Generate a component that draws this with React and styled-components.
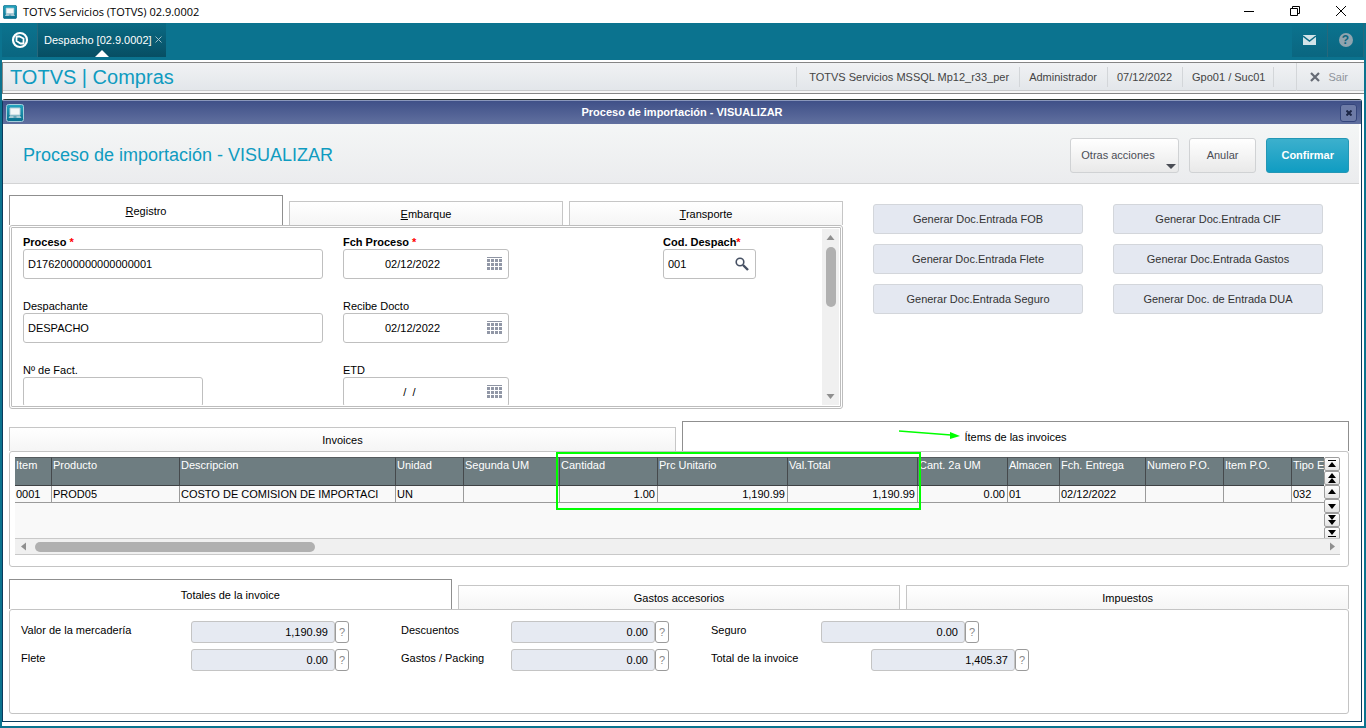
import React from 'react';
import styled, { createGlobalStyle, css } from 'styled-components';

const GlobalStyle = createGlobalStyle`
  * {
    box-sizing: border-box;
  }
  body {
    margin: 0;
    font-family: "Liberation Sans", Arial, sans-serif;
    font-size: 11px;
    color: #000;
    background: #fff;
  }
  button, input {
    font: inherit;
    color: inherit;
    margin: 0;
    padding: 0;
  }
`;

/* ---------- icons ---------- */

const AppIcon = ({ size }) => (
  <svg width={size} height={size} viewBox="0 0 18 18" aria-hidden="true">
    <defs>
      <linearGradient id={`app${size}`} x1="0" y1="0" x2="0" y2="1">
        <stop offset="0" stopColor="#23a5c0" />
        <stop offset="1" stopColor="#0a6f8e" />
      </linearGradient>
    </defs>
    <rect x="0.5" y="0.5" width="17" height="17" rx="2" fill={`url(#app${size})`} stroke={size > 14 ? '#a5cedb' : '#0a6f8e'} />
    <path d="M4 4h10v7H4z" fill="#f3f6f7" stroke="#b4ced8" />
    <path d="M4 11.5h10l1.5 2.5h-13z" fill="#a9c9d4" />
    <path d="M7.5 12.5h3v1h-3z" fill="#2b7f99" />
  </svg>
);

const TotvsIcon = () => (
  <svg width="18" height="18" viewBox="0 0 18 18" aria-hidden="true">
    <circle cx="9" cy="9" r="7" fill="none" stroke="#fff" strokeWidth="2.2" />
    <path d="M5.5 5.5h3l4 2v5h-3l-4-2.500z" fill="#0a6a84" stroke="#fff" strokeWidth="1.8" />
  </svg>
);

const MailIcon = () => (
  <svg width="14" height="12" viewBox="0 0 14 12" aria-hidden="true">
    <path d="M0 1h13v10H0z" fill="#d3e3e8" />
    <path d="M0 2l6.500 5L13 2" fill="none" stroke="#0a6a84" strokeWidth="1.4" />
  </svg>
);

const CalendarIcon = () => (
  <svg width="15" height="14" viewBox="0 0 15 14" aria-hidden="true">
    <path d="M0 0h15v1H0z" fill="#8e94a3" />
    {[2, 6, 10].map(y => [0, 4, 8, 12].map(x => (
      <rect key={`${x}-${y}`} x={x} y={y} width="3" height="3" fill="#9197a6" />
    )))}
  </svg>
);

const SearchIcon = () => (
  <svg width="14" height="14" viewBox="0 0 14 14" aria-hidden="true">
    <circle cx="5" cy="5" r="3.8" fill="none" stroke="#465063" strokeWidth="1.6" />
    <path d="M8 8l5 5" stroke="#465063" strokeWidth="2.4" />
  </svg>
);

const Arrow = ({ dir, color = '#8f8f8f' }) => {
  const turn = { up: 0, right: 90, down: 180, left: 270 }[dir];
  return (
    <svg width="9" height="9" viewBox="0 0 9 9" aria-hidden="true">
      <path d="M0.5 7L4.5 2l4 5z" fill={color} transform={`rotate(${turn} 4.5 4.5)`} />
    </svg>
  );
};

const navShapes = {
  first: 'M4 2h8v1H4zM4 9h8L8 4z',
  pageUp: 'M4 6h8L8 1zM4 11h8L8 6z',
  up: 'M4 8h8L8 3z',
  down: 'M4 4h8L8 9z',
  pageDown: 'M4 1h8L8 6zM4 6h8l-4 5z',
  last: 'M4 2h8L8 7zM4 8h8v1H4z',
};

const NavIcon = ({ kind }) => (
  <svg width="16" height="12" viewBox="0 0 16 12" aria-hidden="true">
    <path d={navShapes[kind]} fill="#000" />
  </svg>
);

/* ---------- window chrome ---------- */

const Page = styled.div`
  display: flex;
  flex-direction: column;
  min-height: 100vh;
  background: #fff;
`;

const WindowBar = styled.header`
  display: flex;
  align-items: center;
  height: 23px;
  padding: 0 2px 0 3px;
  gap: 6px;
  font-family: "Open Sans", "Noto Sans", sans-serif;
  font-size: 11px;
`;

const WindowButtons = styled.div`
  display: flex;
  margin-left: auto;
`;

const WindowButton = styled.button`
  display: flex;
  align-items: center;
  justify-content: center;
  width: 46px;
  height: 22px;
  padding-bottom: 2px;
  border: 0;
  background: none;
`;

const TopBar = styled.nav`
  display: flex;
  align-items: flex-start;
  height: 37px;
  padding: 0 2px;
  background: #0b738f;
`;

const TopCell = styled.button`
  display: flex;
  align-items: center;
  justify-content: center;
  width: 36px;
  height: 34px;
  border: 0;
  border-right: 1px solid #27687c;
  background: linear-gradient(#0b738f, #0a6680);
  color: #fff;
`;

const TopTab = styled.div`
  position: relative;
  display: flex;
  align-items: center;
  height: 34px;
  padding: 0 4px 0 6px;
  gap: 3px;
  background: linear-gradient(#0a6a84, #074e63);
  color: #fff;
  a {
    color: #fff;
    text-decoration: none;
  }
  &::after {
    content: "";
    position: absolute;
    left: 50%;
    bottom: 0;
    margin-left: -7px;
    border: 7px solid transparent;
    border-top: 0;
    border-bottom-color: #fff;
  }
`;

const TabClose = styled.button`
  display: flex;
  border: 0;
  background: none;
`;

const TopRight = styled.div`
  display: flex;
  margin-left: auto;
`;

const HelpBadge = styled.span`
  width: 14px;
  height: 14px;
  border-radius: 50%;
  background: #8fa4af;
  color: #0a6680;
  font-size: 12px;
  font-weight: bold;
  line-height: 14px;
`;

const Frame = styled.main`
  display: flex;
  flex: 1;
  flex-direction: column;
  padding: 2px 0 4px;
  border: solid #0b738f;
  border-width: 0 2px 2px;
`;

const ModuleBar = styled.div`
  display: flex;
  align-items: center;
  height: 32px;
  padding: 0 6px 2px 7px;
  border: 1px solid #858585;
  border-right: 0;
  background: linear-gradient(#f0f2f4, #e1e5e9);
  box-shadow: inset 0 -2px #f6f6f6, inset 0 -3px #c9cbcd;
  color: #444;
`;

const ModuleName = styled.h1`
  flex: 1;
  margin: 0;
  color: #0f9bc0;
  font-size: 20px;
  font-weight: normal;
`;

const ModuleInfo = styled.span`
  padding: 0 ${p => (p.$last ? 8 : 10)}px 0 ${p => (p.$first ? 12 : 9)}px;
  border-left: 1px solid #d3d6d9;
  border-right: ${p => (p.$last ? '1px solid #d3d6d9' : 0)};
  line-height: 20px;
`;

const ExitButton = styled.button`
  display: flex;
  align-items: center;
  gap: 8px;
  height: 28px;
  margin-left: 22px;
  padding: 0 10px 0 13px;
  border: 0;
  border-left: 1px solid #d3d6d9;
  background: none;
  color: #8f949b;
`;

/* ---------- dialog ---------- */

const Dialog = styled.section`
  display: flex;
  flex: 1;
  flex-direction: column;
  margin: 5px 2px 0 0;
  border: 1px solid #0b3a5c;
  border-top-color: #2b332f;
  border-radius: 3px 3px 0 0;
`;

const DialogBar = styled.div`
  display: flex;
  align-items: center;
  height: 24px;
  padding: 0 4px 0 3px;
  border-top: 1px solid #8a97bb;
  background: linear-gradient(#3f5088, #61709f);
  color: #fff;
  font-weight: bold;
  h2 {
    flex: 1;
    margin: 0 0 2px;
    font-size: 11px;
    text-align: center;
  }
`;

const DialogClose = styled.button`
  display: flex;
  align-items: center;
  justify-content: center;
  width: 17px;
  height: 18px;
  border: 1px solid #34457c;
  border-radius: 3px;
  background: #6d7ba7;
`;

const DialogHeader = styled.div`
  display: flex;
  align-items: center;
  height: 60px;
  margin-right: 2px;
  padding: 3px 10px 0 20px;
  gap: 10px;
  border-bottom: 1px solid #d3d4d5;
  background: linear-gradient(#f4f6f6, #ebecee);
  h3 {
    flex: 1;
    margin: 0;
    color: #0f9bc0;
    font-size: 18px;
    font-weight: normal;
  }
`;

const ActionButton = styled.button`
  display: flex;
  align-items: center;
  height: 35px;
  padding: 0 ${p => (p.$menu ? 2 : 17)}px 0 ${p => (p.$menu ? 10 : 17)}px;
  border: 1px solid #d0d2d4;
  border-radius: 3px;
  background: linear-gradient(#fff, #e9e9e9);
  color: #4a4d55;
  svg {
    align-self: flex-end;
    margin: 0 0 3px 11px;
  }
  ${p => p.$primary && css`
    padding: 0 14px;
    border-color: #2397b5;
    background: linear-gradient(#3cb0cd, #109cc2);
    color: #fff;
    font-weight: bold;
  `}
`;

const DialogBody = styled.div`
  display: flex;
  flex: 1;
  flex-direction: column;
  padding: 11px 12px 7px 6px;
  gap: 12px;
`;

const TopArea = styled.div`
  display: flex;
  gap: 30px;
`;

const TabGroup = styled.div`
  display: flex;
  flex: 1;
  flex-direction: column;
  min-width: 0;
`;

const TabStrip = styled.div`
  display: flex;
  align-items: flex-end;
  gap: 6px;
  height: 30px;
`;

const Tab = styled.button`
  flex: 1;
  height: ${p => (p.$active ? 30 : 24)}px;
  border: 1px solid ${p => (p.$active ? '#8f8f8f' : '#c6c6c6')};
  border-bottom: 0;
  background: ${p => (p.$active ? '#fff' : 'linear-gradient(#fff, #f5f5f5)')};
  text-align: center;
`;

const Panel = styled.div`
  position: relative;
  flex: 1;
  border: 1px solid #c4c4c4;
  border-radius: 3px;
  background: #fff;
`;

const FormPanel = styled(Panel)`
  display: flex;
  flex: none;
  height: 184px;
  padding: 1px 1px 1px 0;
  border: 3px double #bdbdbd;
`;

const FormGrid = styled.div`
  display: grid;
  grid-template-columns: 300px 300px 1fr;
  grid-auto-rows: 64px;
  flex: 1;
  column-gap: 20px;
  padding: 6px 0 0 11px;
  overflow: hidden;
`;

const Field = styled.div`
  display: flex;
  flex-direction: column;
  align-items: flex-start;
  label {
    line-height: 14px;
    font-weight: ${p => (p.$required ? 'bold' : 'normal')};
  }
  em {
    color: #f00;
    font-style: normal;
  }
`;

const InputBox = styled.div`
  display: flex;
  align-items: center;
  width: ${p => p.$width}px;
  max-width: 100%;
  height: 30px;
  padding: 0 6px 0 4px;
  border: 1px solid #bfbfbf;
  border-radius: 3px;
  background: #fff;
  input {
    flex: 1;
    min-width: 0;
    padding-right: ${p => (p.$center ? 10 : 0)}px;
    border: 0;
    outline: 0;
    background: none;
    text-align: ${p => (p.$center ? 'center' : 'left')};
  }
`;

const IconButton = styled.button`
  display: flex;
  border: 0;
  background: none;
`;

const ScrollColumn = styled.div`
  display: flex;
  flex-direction: column;
  align-items: center;
  width: 17px;
  padding: 4px 0;
  background: #f0f0f0;
`;

const ThumbY = styled.div`
  width: 10px;
  height: 60px;
  margin: 5px 0 auto;
  border-radius: 5px;
  background: #b0b0b0;
`;

const GenerateGrid = styled.div`
  display: grid;
  grid-template-columns: 210px 210px;
  grid-auto-rows: 30px;
  gap: 10px 30px;
  padding: 9px 26px 0 0;
`;

const GenerateButton = styled.button`
  border: 1px solid #d3d6db;
  border-radius: 3px;
  background: #e4e8f1;
  color: #333;
`;

/* ---------- invoice items ---------- */

const GridPanel = styled(Panel)`
  flex: none;
  padding: 5px 8px 11px 5px;
`;

const GridArea = styled.div`
  display: flex;
  height: 81px;
  background: #f9f9f9;
`;

const GridView = styled.div`
  flex: 1;
  overflow: hidden;
`;

const ItemsTable = styled.table`
  width: 1360px;
  table-layout: fixed;
  border-collapse: separate;
  border-spacing: 0;
  th, td {
    overflow: hidden;
    padding: 0 2px 0 1px;
    white-space: nowrap;
    text-align: left;
  }
  th {
    height: 29px;
    padding-top: 1px;
    border-top: 1px solid #555b5e;
    border-right: 1px solid #45494c;
    border-bottom: 1px solid #3f4245;
    background: #6e7d81;
    color: #fff;
    font-weight: normal;
    line-height: 12px;
    vertical-align: top;
  }
  td {
    height: 17px;
    border-right: 1px solid #9b9b9b;
    border-bottom: 1px solid #9b9b9b;
  }
  td.num {
    text-align: right;
  }
`;

const NavColumn = styled.div`
  display: flex;
  flex-direction: column;
  width: 16px;
  overflow: hidden;
`;

const NavButton = styled.button`
  display: flex;
  flex: none;
  align-items: center;
  justify-content: center;
  height: 14px;
  border: 1px solid #9d9d9d;
  border-radius: 2px;
  background: linear-gradient(#fff, #e4e4e4);
  svg {
    flex: none;
  }
`;

const ScrollRow = styled.div`
  display: flex;
  align-items: center;
  height: 17px;
  padding: 0 3px 0 4px;
  border: solid #c9c9c9;
  border-width: 1px 0;
  background: #f0f0f0;
`;

const ThumbX = styled.div`
  width: 280px;
  height: 10px;
  margin: 0 auto 0 7px;
  border-radius: 5px;
  background: #b0b0b0;
`;

/* green marks drawn over the grid */
const MarkBox = styled.div`
  position: absolute;
  top: 0;
  left: 546px;
  width: 365px;
  height: 58px;
  border: 2px solid #00ff00;
  pointer-events: none;
`;

const MarkArrow = styled.svg`
  position: absolute;
  top: -23px;
  left: 888px;
  width: 64px;
  height: 12px;
  pointer-events: none;
`;

/* ---------- totals ---------- */

const TotalsPanel = styled(Panel)`
  padding: 11px;
  display: flex;
  flex-direction: column;
  gap: 6px;
`;

const TotalsRow = styled.div`
  display: flex;
  flex-wrap: wrap;
`;

const Total = styled.div`
  display: flex;
  margin-right: ${p => p.$after || 0}px;
  label {
    width: ${p => p.$label}px;
    line-height: 18px;
  }
  input {
    width: 144px;
    height: 22px;
    padding: 0 6px;
    border: 1px solid #c4c4c4;
    border-radius: 3px;
    background: #e6eaf2;
    text-align: right;
  }
  button {
    width: 14px;
    height: 22px;
    border: 1px solid #9b9b9b;
    border-radius: 3px;
    background: #fff;
    color: #888;
  }
`;

const generateLabels = [
  'Generar Doc.Entrada FOB',
  'Generar Doc.Entrada CIF',
  'Generar Doc.Entrada Flete',
  'Generar Doc.Entrada Gastos',
  'Generar Doc.Entrada Seguro',
  'Generar Doc. de Entrada DUA',
];

const columns = [
  { title: 'Item', width: 37, value: '0001' },
  { title: 'Producto', width: 128, value: 'PROD05' },
  { title: 'Descripcion', width: 216, value: 'COSTO DE COMISION DE IMPORTACI' },
  { title: 'Unidad', width: 68, value: 'UN' },
  { title: 'Segunda UM', width: 96, value: '' },
  { title: 'Cantidad', width: 98, value: '1.00', num: true },
  { title: 'Prc Unitario', width: 130, value: '1,190.99', num: true },
  { title: 'Val.Total', width: 130, value: '1,190.99', num: true },
  { title: 'Cant. 2a UM', width: 90, value: '0.00', num: true },
  { title: 'Almacen', width: 52, value: '01' },
  { title: 'Fch. Entrega', width: 86, value: '02/12/2022' },
  { title: 'Numero P.O.', width: 78, value: '' },
  { title: 'Item P.O.', width: 68, value: '' },
  { title: 'Tipo Entrada', width: 83, value: '032' },
];

const totals = [
  [
    { id: 'valor', text: 'Valor de la mercadería', value: '1,190.99', label: 170, after: 52 },
    { id: 'descuentos', text: 'Descuentos', value: '0.00', label: 110, after: 42 },
    { id: 'seguro', text: 'Seguro', value: '0.00', label: 110 },
  ],
  [
    { id: 'flete', text: 'Flete', value: '0.00', label: 170, after: 52 },
    { id: 'gastos', text: 'Gastos / Packing', value: '0.00', label: 110, after: 42 },
    { id: 'total', text: 'Total de la invoice', value: '1,405.37', label: 160 },
  ],
];

const DateField = ({ id, label, value, required }) => (
  <Field $required={required}>
    <label htmlFor={id}>{label} {required && <em>*</em>}</label>
    <InputBox $width={166} $center>
      <input id={id} defaultValue={value} />
      <IconButton aria-label="Calendario"><CalendarIcon /></IconButton>
    </InputBox>
  </Field>
);

const App = () => (
  <Page>
    <GlobalStyle />
    <WindowBar>
      <AppIcon size={14} />
      <span>TOTVS Servicios (TOTVS) 02.9.0002</span>
      <WindowButtons>
        <WindowButton aria-label="Minimizar">
          <svg width="10" height="10"><path d="M0 5.5h10" stroke="#000" /></svg>
        </WindowButton>
        <WindowButton aria-label="Restaurar">
          <svg width="10" height="10" fill="none" stroke="#000">
            <path d="M0.5 2.5h7v7h-7zM2.5 2.5v-2h7v7h-2" />
          </svg>
        </WindowButton>
        <WindowButton aria-label="Cerrar">
          <svg width="10" height="10"><path d="M0 0l10 10M10 0L0 10" stroke="#000" /></svg>
        </WindowButton>
      </WindowButtons>
    </WindowBar>

    <TopBar>
      <TopCell aria-label="TOTVS"><TotvsIcon /></TopCell>
      <TopTab>
        <a href="#despacho">Despacho [02.9.0002]</a>
        <TabClose aria-label="Cerrar Despacho">
          <svg width="7" height="9"><path d="M0.5 0.5l6 6M6.500 0.5l-6 6" stroke="#9fc0ca" /></svg>
        </TabClose>
      </TopTab>
      <TopRight>
        <TopCell aria-label="Mensajes"><MailIcon /></TopCell>
        <TopCell aria-label="Ayuda"><HelpBadge>?</HelpBadge></TopCell>
      </TopRight>
    </TopBar>

    <Frame>
      <ModuleBar>
        <ModuleName>TOTVS | Compras</ModuleName>
        <ModuleInfo $first>TOTVS Servicios MSSQL Mp12_r33_per</ModuleInfo>
        <ModuleInfo>Administrador</ModuleInfo>
        <ModuleInfo>07/12/2022</ModuleInfo>
        <ModuleInfo $last>Gpo01 / Suc01</ModuleInfo>
        <ExitButton>
          <svg width="10" height="10"><path d="M1 1l8 8M9 1L1 9" stroke="#666b75" strokeWidth="2.2" /></svg>
          Sair
        </ExitButton>
      </ModuleBar>

      <Dialog>
        <DialogBar>
          <AppIcon size={18} />
          <h2>Proceso de importación - VISUALIZAR</h2>
          <DialogClose aria-label="Cerrar">
            <svg width="6" height="6"><path d="M0.5 0.5l5 5M5.5 0.5l-5 5" stroke="#1c2646" strokeWidth="2" /></svg>
          </DialogClose>
        </DialogBar>
        <DialogHeader>
          <h3>Proceso de importación - VISUALIZAR</h3>
          <ActionButton $menu>
            Otras acciones
            <svg width="10" height="5"><path d="M0 0h10L5 5z" fill="#4a4d55" /></svg>
          </ActionButton>
          <ActionButton>Anular</ActionButton>
          <ActionButton $primary>Confirmar</ActionButton>
        </DialogHeader>

        <DialogBody>
          <TopArea>
            <TabGroup>
              <TabStrip>
                <Tab $active><u>R</u>egistro</Tab>
                <Tab><u>E</u>mbarque</Tab>
                <Tab><u>T</u>ransporte</Tab>
              </TabStrip>
              <FormPanel>
                <FormGrid>
                  <Field $required>
                    <label htmlFor="proceso">Proceso <em>*</em></label>
                    <InputBox $width={300}>
                      <input id="proceso" defaultValue="D1762000000000000001" />
                    </InputBox>
                  </Field>
                  <DateField id="fch" label="Fch Proceso" value="02/12/2022" required />
                  <Field $required>
                    <label htmlFor="cod">Cod. Despach<em>*</em></label>
                    <InputBox $width={93}>
                      <input id="cod" defaultValue="001" />
                      <IconButton aria-label="Buscar"><SearchIcon /></IconButton>
                    </InputBox>
                  </Field>
                  <Field>
                    <label htmlFor="despachante">Despachante</label>
                    <InputBox $width={300}>
                      <input id="despachante" defaultValue="DESPACHO" />
                    </InputBox>
                  </Field>
                  <DateField id="recibe" label="Recibe Docto" value="02/12/2022" />
                  <span />
                  <Field>
                    <label htmlFor="fact">Nº de Fact.</label>
                    <InputBox $width={180}>
                      <input id="fact" />
                    </InputBox>
                  </Field>
                  <DateField id="etd" label="ETD" value="/  /  " />
                </FormGrid>
                <ScrollColumn>
                  <Arrow dir="up" />
                  <ThumbY />
                  <Arrow dir="down" />
                </ScrollColumn>
              </FormPanel>
            </TabGroup>
            <GenerateGrid>
              {generateLabels.map(label => (
                <GenerateButton key={label}>{label}</GenerateButton>
              ))}
            </GenerateGrid>
          </TopArea>

          <div>
            <TabStrip>
              <Tab>Invoices</Tab>
              <Tab $active>Ítems de las invoices</Tab>
            </TabStrip>
            <GridPanel>
              <GridArea>
                <GridView>
                  <ItemsTable>
                    <colgroup>
                      {columns.map(col => <col key={col.title} width={col.width} />)}
                    </colgroup>
                    <thead>
                      <tr>
                        {columns.map(col => <th key={col.title}>{col.title}</th>)}
                      </tr>
                    </thead>
                    <tbody>
                      <tr>
                        {columns.map(col => (
                          <td key={col.title} className={col.num ? 'num' : undefined}>{col.value}</td>
                        ))}
                      </tr>
                    </tbody>
                  </ItemsTable>
                </GridView>
                <NavColumn>
                  {Object.keys(navShapes).map(kind => (
                    <NavButton key={kind} aria-label={kind}><NavIcon kind={kind} /></NavButton>
                  ))}
                </NavColumn>
              </GridArea>
              <ScrollRow>
                <Arrow dir="left" />
                <ThumbX />
                <Arrow dir="right" />
              </ScrollRow>
              <MarkBox />
              <MarkArrow viewBox="0 0 64 12">
                <path d="M1 2l52 4" stroke="#00ff00" strokeWidth="1.5" />
                <path d="M52 3l10 4-10 3z" fill="#00ff00" />
              </MarkArrow>
            </GridPanel>
          </div>

          <TabGroup>
            <TabStrip>
              <Tab $active>Totales de la invoice</Tab>
              <Tab>Gastos accesorios</Tab>
              <Tab>Impuestos</Tab>
            </TabStrip>
            <TotalsPanel>
              {totals.map(row => (
                <TotalsRow key={row[0].id}>
                  {row.map(item => (
                    <Total key={item.id} $label={item.label} $after={item.after}>
                      <label htmlFor={item.id}>{item.text}</label>
                      <input id={item.id} defaultValue={item.value} readOnly />
                      <button aria-label={`Ayuda ${item.text}`}>?</button>
                    </Total>
                  ))}
                </TotalsRow>
              ))}
            </TotalsPanel>
          </TabGroup>
        </DialogBody>
      </Dialog>
    </Frame>
  </Page>
);

export default App;
